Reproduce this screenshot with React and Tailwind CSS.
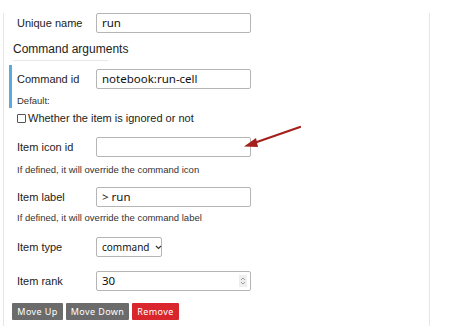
import React from 'react'

const label = 'w-[79px] shrink-0 text-[11px] text-[#222]'
const box = 'h-[20px] w-[155px] border border-[#b5b5b5] rounded-[2px] bg-white flex items-center px-[5px] text-[11.5px] text-[#111] font-["Noto_Sans",sans-serif]'

function Row({ name, children, className = '' }) {
  return (
    <div className={`flex items-center pl-[13px] ${className}`}>
      <span className={label}>{name}</span>
      {children}
    </div>
  )
}

function Help({ children, className = '' }) {
  return (
    <div className={`pl-[13px] h-[12px] leading-[12px] text-[9.5px] text-[#333] ${className}`}>
      {children}
    </div>
  )
}

export default function App() {
  return (
    <div className="relative w-[474px] h-[326px] bg-white overflow-hidden font-['Liberation_Sans',Arial,sans-serif]">
      <div className="ml-[3px] w-[427px] h-[324px] border-l border-r border-b border-[#e6e6e6]">
        <Row name="Unique name" className="mt-[13px]">
          <div className={box}>run</div>
        </Row>

        <div className="mt-[9px] ml-[9px] h-[14px] leading-[14px] text-[12px] text-[#222]">
          Command arguments
        </div>
        <div className="mt-[4px] ml-[9px] w-[95px] h-px bg-[#e8e8e8]" />

        <div className="mt-[4px] ml-[5px] border-l-[3px] border-[#5aa9e0] pt-[4px] pb-[1px]">
          <div className="flex items-center pl-[5px]">
            <span className={label}>Command id</span>
            <div className={box}>notebook:run-cell</div>
          </div>
          <div className="mt-[6px] pl-[5px] h-[12px] leading-[12px] text-[9.5px] text-[#333]">Default:</div>
        </div>

        <div className="mt-[4px] pl-[13px] flex items-center gap-[2px] h-[12px]">
          <span className="w-[9px] h-[9px] border border-[#555] rounded-[1px] bg-white" />
          <span className="text-[11px] text-[#222]">Whether the item is ignored or not</span>
        </div>

        <Row name="Item icon id" className="mt-[13px]">
          <div className={box}></div>
        </Row>
        <Help className="mt-[7px]">If defined, it will override the command icon</Help>

        <Row name="Item label" className="mt-[11px]">
          <div className={box}>&gt; run</div>
        </Row>
        <Help className="mt-[5px]">If defined, it will override the command label</Help>

        <Row name="Item type" className="mt-[13px]">
          <div className="h-[20px] w-[66px] border border-[#b5b5b5] rounded-[2px] bg-white flex items-center pl-[5px] text-[10px] text-[#111] font-['Noto_Sans',sans-serif]">
            <span className="whitespace-nowrap">command</span>
            <svg className="ml-[5px] shrink-0" width="7" height="5" viewBox="0 0 7 5" fill="none" stroke="#333" strokeWidth="1.1">
              <path d="M1 1 L3.5 3.5 L6 1" />
            </svg>
          </div>
        </Row>

        <Row name="Item rank" className="mt-[14px]">
          <div className={`${box} justify-between pr-[3px]`}>
            30
            <span className="w-[8px] h-[12px] bg-[#eee] flex flex-col items-center justify-center text-[#999]">
              <svg width="6" height="10" viewBox="0 0 6 10" fill="none" stroke="#888" strokeWidth="0.8">
                <path d="M1 4 L3 2 L5 4 M1 6 L3 8 L5 6" />
              </svg>
            </span>
          </div>
        </Row>

        <div className="mt-[12px] ml-[8px] flex gap-[3px] font-['Noto_Sans',sans-serif] text-[9px] tracking-[0.4px] text-white">
          <button className="h-[17px] w-[51px] bg-[#6b6b6b] rounded-[1px]">Move Up</button>
          <button className="h-[17px] w-[63px] bg-[#6b6b6b] rounded-[1px]">Move Down</button>
          <button className="h-[17px] w-[47px] bg-[#d8262c] rounded-[1px]">Remove</button>
        </div>
      </div>

      <svg className="absolute left-0 top-0" width="474" height="326" viewBox="0 0 474 326">
        <line x1="300" y1="127" x2="254" y2="143" stroke="#a3201c" strokeWidth="2.2" strokeLinecap="round" />
        <path d="M244 146.5 L256 138 L258 147 Z" fill="#a3201c" />
      </svg>
    </div>
  )
}
